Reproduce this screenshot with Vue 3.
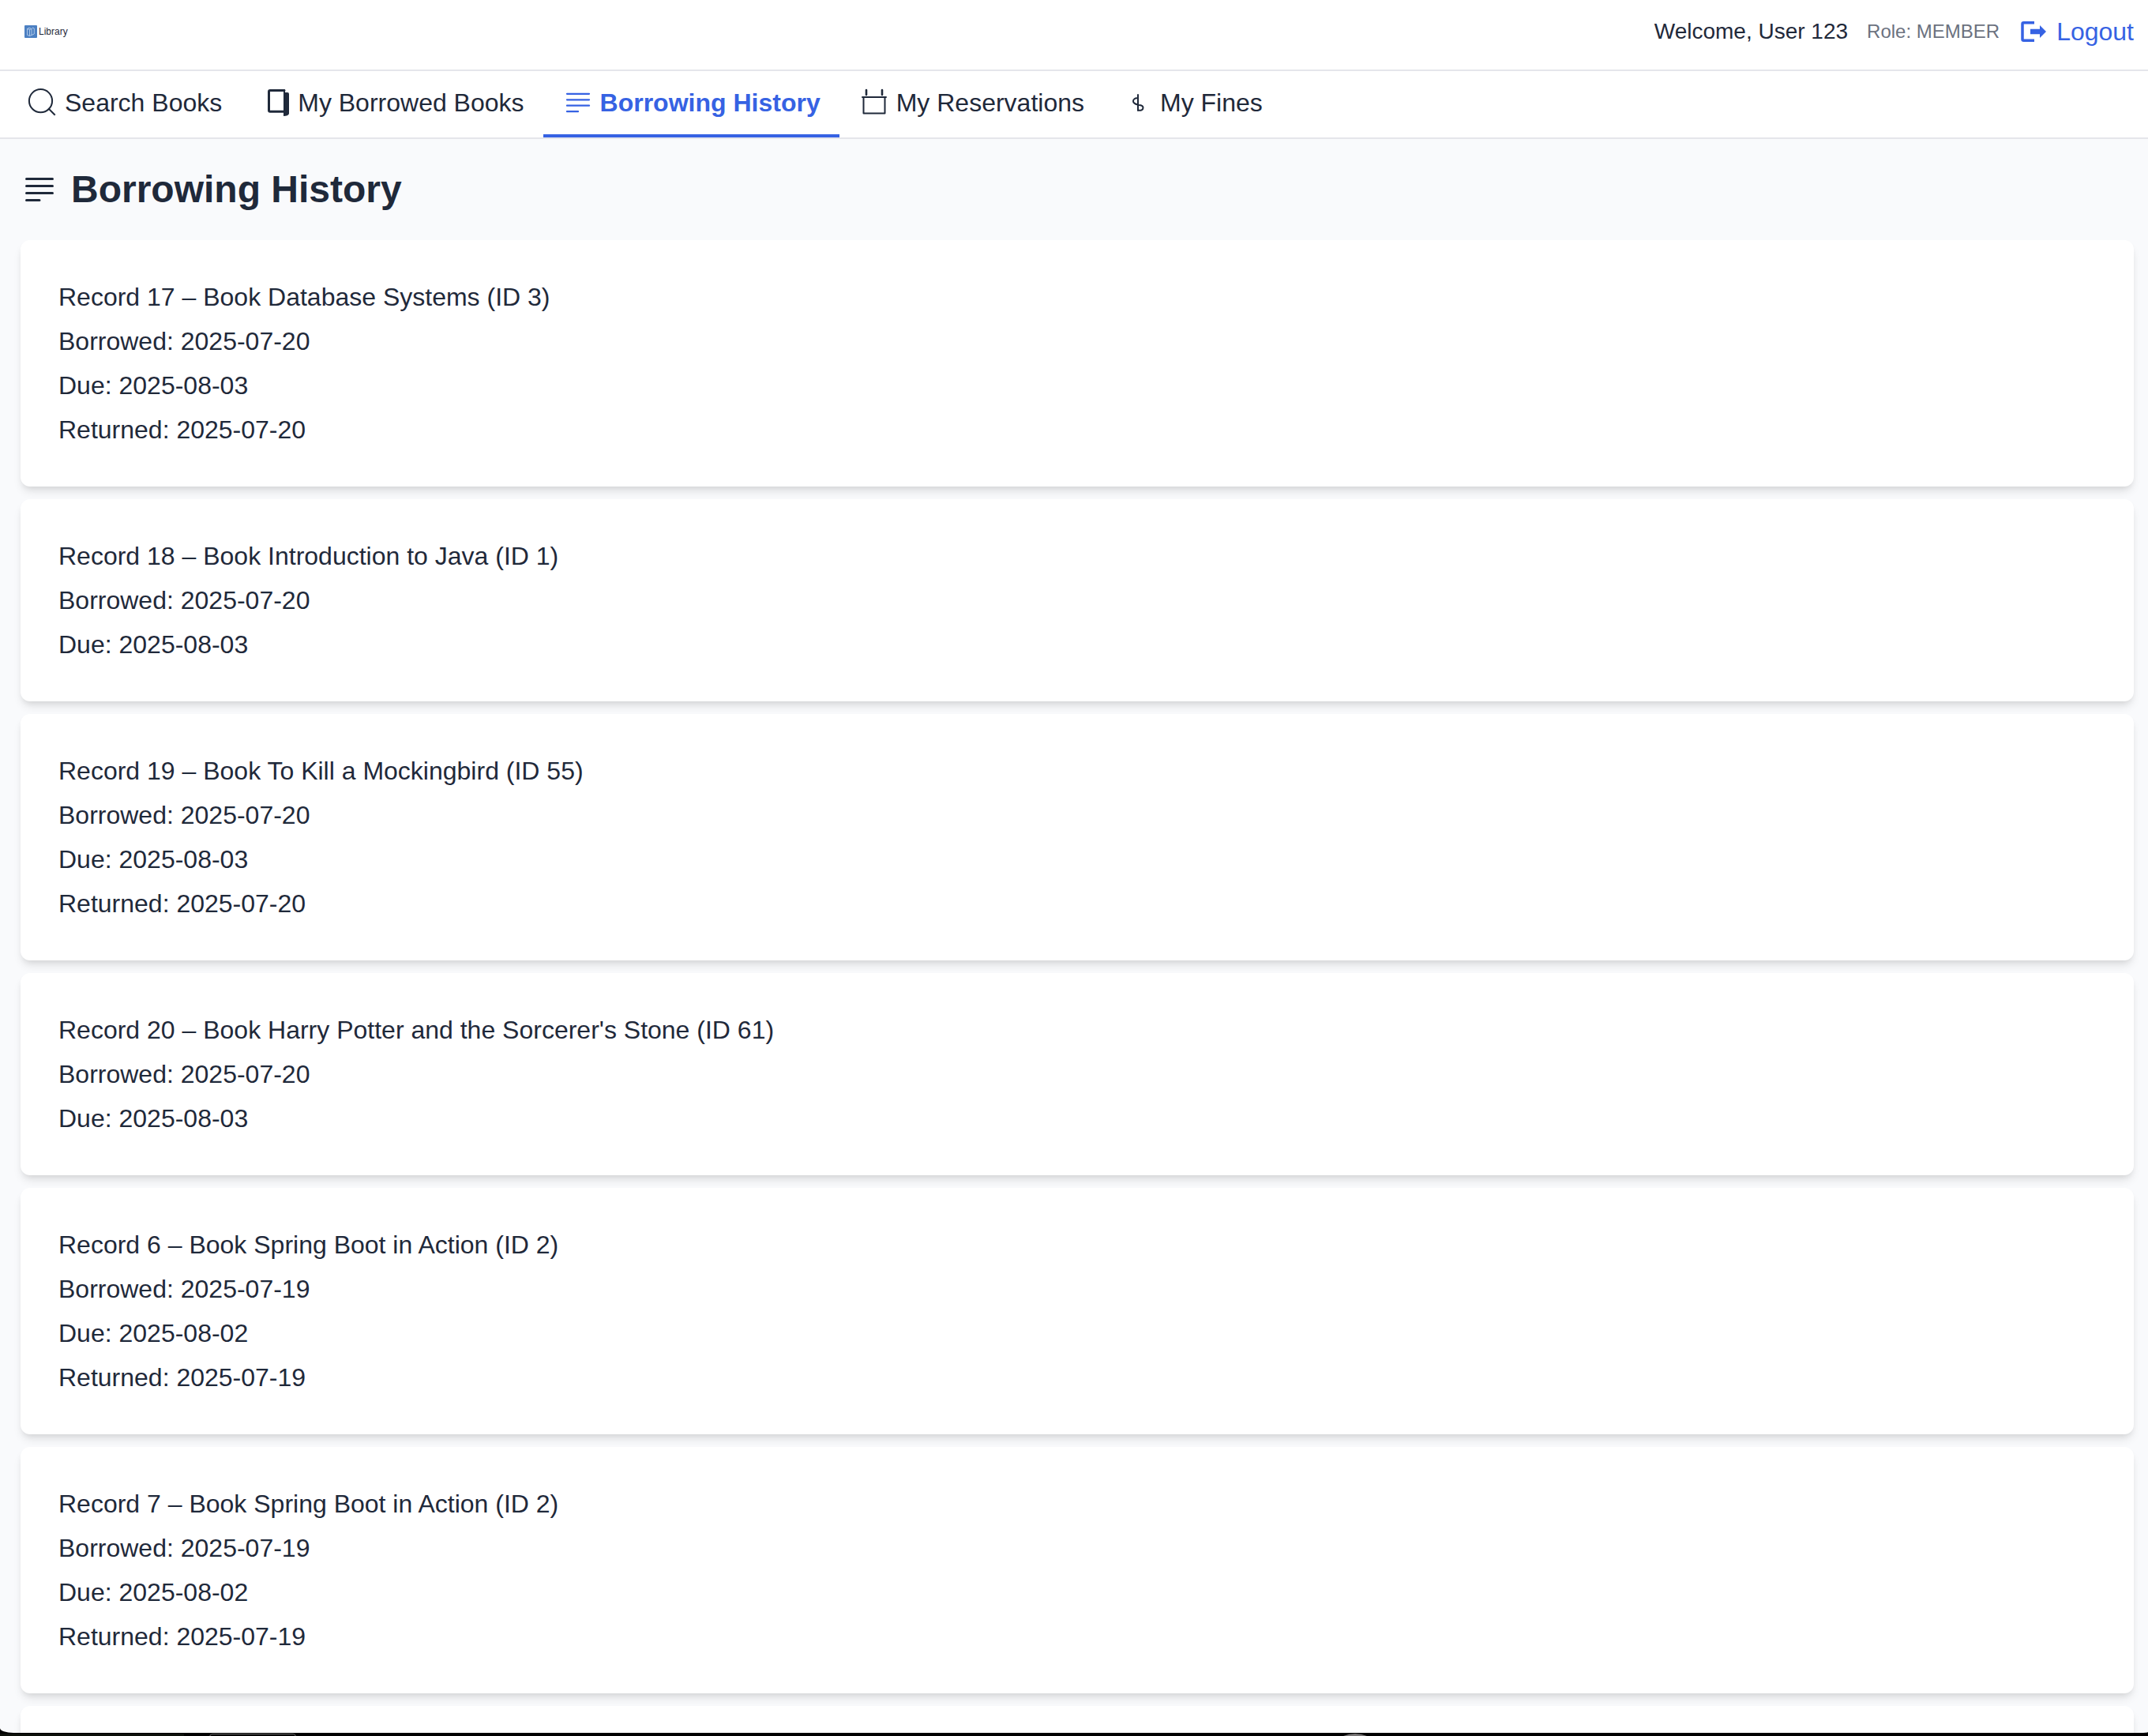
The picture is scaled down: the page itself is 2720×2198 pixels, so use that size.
<script setup>
const tabs = [
  { label: 'Search Books', icon: 'search' },
  { label: 'My Borrowed Books', icon: 'book' },
  { label: 'Borrowing History', icon: 'history', active: true },
  { label: 'My Reservations', icon: 'calendar' },
  { label: 'My Fines', icon: 'dollar' },
]

const records = [
  { id: 17, title: 'Database Systems', bookId: 3, borrowed: '2025-07-20', due: '2025-08-03', returned: '2025-07-20' },
  { id: 18, title: 'Introduction to Java', bookId: 1, borrowed: '2025-07-20', due: '2025-08-03' },
  { id: 19, title: 'To Kill a Mockingbird', bookId: 55, borrowed: '2025-07-20', due: '2025-08-03', returned: '2025-07-20' },
  { id: 20, title: "Harry Potter and the Sorcerer's Stone", bookId: 61, borrowed: '2025-07-20', due: '2025-08-03' },
  { id: 6, title: 'Spring Boot in Action', bookId: 2, borrowed: '2025-07-19', due: '2025-08-02', returned: '2025-07-19' },
  { id: 7, title: 'Spring Boot in Action', bookId: 2, borrowed: '2025-07-19', due: '2025-08-02', returned: '2025-07-19' },
]
</script>

<template>
  <div class="desktop">
    <div class="window">
      <header class="topbar">
        <a class="logo" href="#">
          <svg class="logo-mark" viewBox="0 0 16 16" aria-hidden="true">
            <rect width="16" height="16" rx="1" fill="#4c80c2" />
            <g fill="none" stroke="#c5d8f0" stroke-width="0.8" stroke-linejoin="round">
              <path d="M3.5 4.5 6.5 5.5V13.500L3.500 12.300Z" />
              <path d="M6.500 5.500 9 4.500V12.500L6.500 13.500" />
              <path d="M9 4.500 10.500 3 12.300 4V11L9 12.500" />
              <path d="M3.500 4.500 6 3.200 8 4" />
            </g>
          </svg>
          <span>Library</span>
        </a>
        <div class="account">
          <span class="welcome">Welcome, User 123</span>
          <span class="role">Role: MEMBER</span>
          <button class="logout" type="button">
            <svg class="icon" viewBox="0 0 40 40" aria-hidden="true">
              <path d="M20 8.700H6.500Q5 8.700 5 10.200V29.800Q5 31.300 6.500 31.300H20" fill="none" stroke="currentColor" stroke-width="3.500" />
              <path d="M15 16.700H27V12L35 20 27 28V23.300H15Z" fill="currentColor" />
            </svg>
            <span>Logout</span>
          </button>
        </div>
      </header>

      <nav class="tabs">
        <a v-for="tab in tabs" :key="tab.label" href="#" class="tab" :class="{ active: tab.active }">
          <svg class="icon" viewBox="0 0 40 40" fill="none" stroke="currentColor" stroke-width="2" stroke-linecap="round" aria-hidden="true">
            <template v-if="tab.icon === 'search'">
              <circle cx="17.500" cy="17.700" r="14.600" />
              <path d="M28 28 35 35" stroke-linecap="square" />
            </template>
            <template v-else-if="tab.icon === 'book'">
              <path d="M31 4.500H13Q11.500 4.500 11.500 6V29.500Q11.500 31.300 13 31.300H30" stroke-width="3" />
              <path d="M31 4V8" stroke-width="2" />
              <path d="M30 7H35Q37 7 37 9V34Q36 37 30 37Z" fill="currentColor" stroke="none" />
            </template>
            <template v-else-if="tab.icon === 'history'">
              <path d="M6 8.800H34M6 16.300H34M6 23.700H34M6 31.200H20" stroke-width="2.300" />
            </template>
            <template v-else-if="tab.icon === 'calendar'">
              <path d="M5 13H35M6.500 13V33.500H33.500V13" stroke-linejoin="round" />
              <path d="M10 4V10M30 4V10" stroke-width="2.600" />
            </template>
            <template v-else>
              <path d="M20 10V30M20 14.500C16.500 13.500 13.500 16 14 18.500C14.500 21.500 18 22 21 23C24 23 26.500 24 26.500 26.500C26.500 29 23.500 30.500 20.500 29.500" />
            </template>
          </svg>
          <span>{{ tab.label }}</span>
        </a>
      </nav>

      <main class="content">
        <h1 class="heading">
          <svg class="heading-icon" viewBox="0 0 48 48" fill="none" stroke="currentColor" stroke-width="3" stroke-linecap="round" aria-hidden="true">
            <path d="M7.500 10.500H40.500M7.500 19.500H40.500M7.500 28.500H40.500M7.500 37.500H24" />
          </svg>
          <span>Borrowing History</span>
        </h1>
        <ul class="records">
          <li v-for="record in records" :key="record.id" class="card">
            <p>Record {{ record.id }} – Book {{ record.title }} (ID {{ record.bookId }})</p>
            <p>Borrowed: {{ record.borrowed }}</p>
            <p>Due: {{ record.due }}</p>
            <p v-if="record.returned">Returned: {{ record.returned }}</p>
          </li>
          <li class="card"></li>
        </ul>
      </main>
    </div>
    <div class="dock" aria-hidden="true">
      <span class="dock-wallpaper"></span>
      <span class="dock-panel"></span>
      <span class="dock-knob"></span>
    </div>
  </div>
</template>

<style>
body {
  margin: 0;
}
</style>

<style scoped>
.desktop {
  display: flex;
  flex-direction: column;
  height: 100vh;
  overflow: hidden;
  background: #000;
  color: #1f293a;
  font-family: "Liberation Sans", Helvetica, Arial, sans-serif;
  font-size: 32px;
  line-height: 48px;
}

.window {
  flex: 1;
  min-height: 0;
  overflow: hidden;
  background: #f9fafc;
  border-radius: 0 0 10px 17px / 0 0 1px 6px;
}

.topbar {
  display: flex;
  justify-content: space-between;
  align-items: center;
  padding: 16px 18px 24px 31px;
  background: #fff;
  border-bottom: 2px solid #e5e6eb;
}

.logo {
  display: flex;
  align-items: center;
  gap: 2px;
  color: inherit;
  font-size: 12px;
  line-height: 16px;
  text-decoration: none;
}

.logo-mark {
  width: 16px;
  height: 16px;
}

.account {
  display: flex;
  align-items: center;
  gap: 24px;
}

.welcome {
  font-size: 28px;
}

.role {
  color: #6c7280;
  font-size: 24px;
}

.logout {
  display: flex;
  align-items: center;
  gap: 8px;
  padding: 0;
  border: 0;
  background: none;
  color: #3662e3;
  font: inherit;
  cursor: pointer;
}

.icon {
  flex: none;
  width: 40px;
  height: 40px;
}

.tabs {
  display: flex;
  padding-left: 10px;
  background: #fff;
  border-bottom: 2px solid #e5e6eb;
}

.tab {
  display: flex;
  align-items: center;
  gap: 8px;
  padding: 16px 24px;
  border-bottom: 4px solid transparent;
  color: inherit;
  text-decoration: none;
  white-space: nowrap;
}

.tab.active {
  border-color: #3662e3;
  color: #3662e3;
  font-weight: 700;
}

.content {
  padding: 28px 18px 28px 26px;
}

.heading {
  display: flex;
  align-items: center;
  gap: 16px;
  margin: 0 0 28px;
  font-size: 48px;
  line-height: 72px;
}

.heading-icon {
  width: 48px;
  height: 48px;
}

.records {
  display: flex;
  flex-direction: column;
  gap: 16px;
  margin: 0;
  padding: 0;
  list-style: none;
}

.card {
  display: flex;
  flex-direction: column;
  gap: 8px;
  padding: 48px;
  border-radius: 12px;
  background: #fff;
  box-shadow: 0 8px 12px -2px rgba(0, 0, 0, 0.1), 0 4px 8px -4px rgba(0, 0, 0, 0.1);
}

.card p {
  margin: 0;
}

.dock {
  position: relative;
  flex: none;
  height: 4px;
  overflow: hidden;
}

.dock-wallpaper,
.dock-panel,
.dock-knob {
  position: absolute;
  top: 1px;
}

.dock-wallpaper {
  left: 0;
  width: 233px;
  height: 3px;
  background: #0c100a;
}

.dock-panel {
  left: 265px;
  width: 108px;
  height: 20px;
  border: 1px solid #6b6b6b;
  border-radius: 4px;
}

.dock-knob {
  left: 1677px;
  width: 78px;
  height: 78px;
  border-radius: 50%;
  background: #767373;
}
</style>
